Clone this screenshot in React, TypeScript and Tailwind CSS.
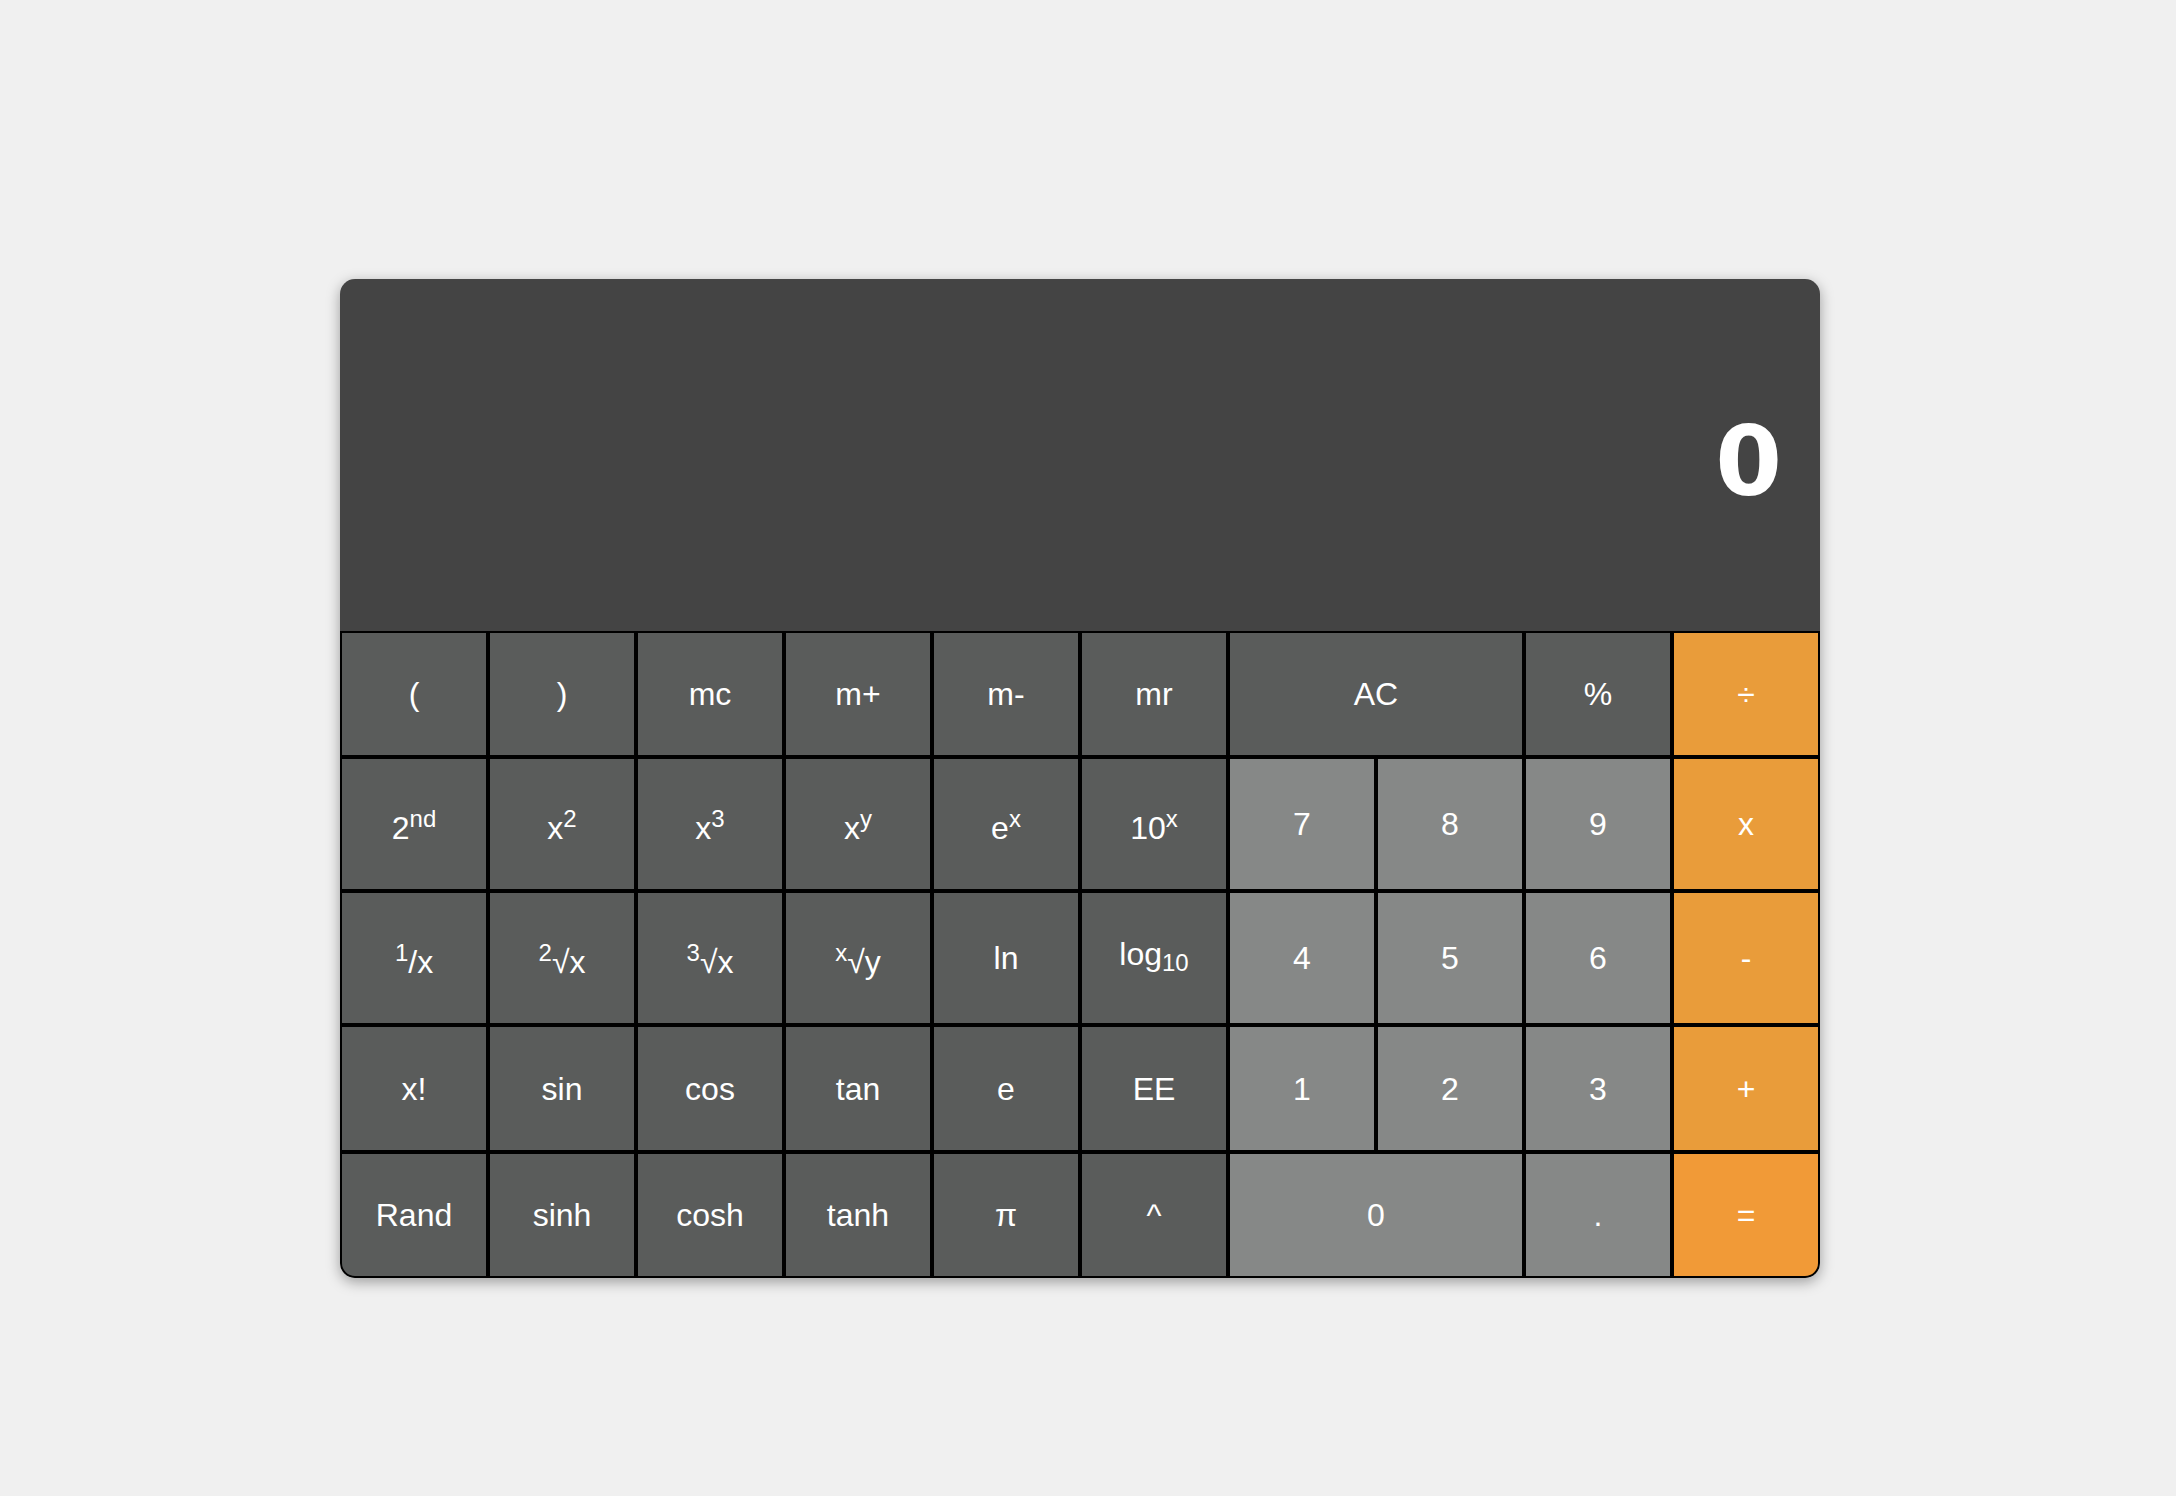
import React from 'react';

type Tone = 'dark' | 'light' | 'orange' | 'equals';

type Key = {
  label: React.ReactNode;
  tone?: Tone;
  wide?: boolean;
  nudge?: 'sup' | 'sub';
  corner?: 'bl' | 'br';
};

const toneClass: Record<Tone, string> = {
  dark: 'bg-[#5a5c5b]',
  light: 'bg-[#868887]',
  orange: 'bg-[#e99c3a]',
  equals: 'bg-[#f19a37]',
};

const nudgeClass = {
  sup: 'pt-[7px]',
  sub: 'pb-[8px]',
};

const cornerClass = {
  bl: 'rounded-bl-[15px]',
  br: 'rounded-br-[15px]',
};

const keys: Key[] = [
  // row 1
  { label: '(' },
  { label: ')' },
  { label: 'mc' },
  { label: 'm+' },
  { label: 'm-' },
  { label: 'mr' },
  { label: 'AC', wide: true },
  { label: '%' },
  { label: '÷', tone: 'orange' },
  // row 2
  { label: <>2<sup>nd</sup></>, nudge: 'sup' },
  { label: <>x<sup>2</sup></>, nudge: 'sup' },
  { label: <>x<sup>3</sup></>, nudge: 'sup' },
  { label: <>x<sup>y</sup></>, nudge: 'sup' },
  { label: <>e<sup>x</sup></>, nudge: 'sup' },
  { label: <>10<sup>x</sup></>, nudge: 'sup' },
  { label: '7', tone: 'light' },
  { label: '8', tone: 'light' },
  { label: '9', tone: 'light' },
  { label: 'x', tone: 'orange' },
  // row 3
  { label: <><sup>1</sup>/x</>, nudge: 'sup' },
  { label: <><sup>2</sup>√x</>, nudge: 'sup' },
  { label: <><sup>3</sup>√x</>, nudge: 'sup' },
  { label: <><sup>x</sup>√y</>, nudge: 'sup' },
  { label: 'ln' },
  { label: <>log<sub>10</sub></>, nudge: 'sub' },
  { label: '4', tone: 'light' },
  { label: '5', tone: 'light' },
  { label: '6', tone: 'light' },
  { label: '-', tone: 'orange' },
  // row 4
  { label: 'x!' },
  { label: 'sin' },
  { label: 'cos' },
  { label: 'tan' },
  { label: 'e' },
  { label: 'EE' },
  { label: '1', tone: 'light' },
  { label: '2', tone: 'light' },
  { label: '3', tone: 'light' },
  { label: '+', tone: 'orange' },
  // row 5
  { label: 'Rand', corner: 'bl' },
  { label: 'sinh' },
  { label: 'cosh' },
  { label: 'tanh' },
  { label: 'π' },
  { label: '^' },
  { label: '0', tone: 'light', wide: true },
  { label: '.', tone: 'light' },
  { label: '=', tone: 'equals', corner: 'br' },
];

function CalcKey({ k }: { k: Key }) {
  return (
    <button
      className={`flex items-center justify-center border-2 border-black text-white text-[32px] ${toneClass[k.tone ?? 'dark']} ${k.wide ? 'col-span-2' : ''} ${k.nudge ? nudgeClass[k.nudge] : ''} ${k.corner ? cornerClass[k.corner] : ''}`}
    >
      <span>{k.label}</span>
    </button>
  );
}

export default function App() {
  return (
    <div className="min-h-screen bg-[#f0f0f0] pt-[279px] pl-[340px] font-['Liberation_Sans',Arial,sans-serif]">
      <div className="w-[1480px] rounded-[15px] overflow-hidden bg-[#444444] shadow-[0_4px_14px_rgba(0,0,0,0.35)]">
        {/* display */}
        <div className="h-[352px] flex items-center justify-end pr-[38px] pt-[14px]">
          <span className="text-white text-[96px] font-bold font-['DejaVu_Sans',sans-serif]">0</span>
        </div>

        <div className="grid grid-cols-[repeat(10,148px)] grid-rows-[126px_134px_134px_127px_126px]">
          {keys.map((k, i) => (
            <CalcKey key={i} k={k} />
          ))}
        </div>
      </div>
    </div>
  );
}
